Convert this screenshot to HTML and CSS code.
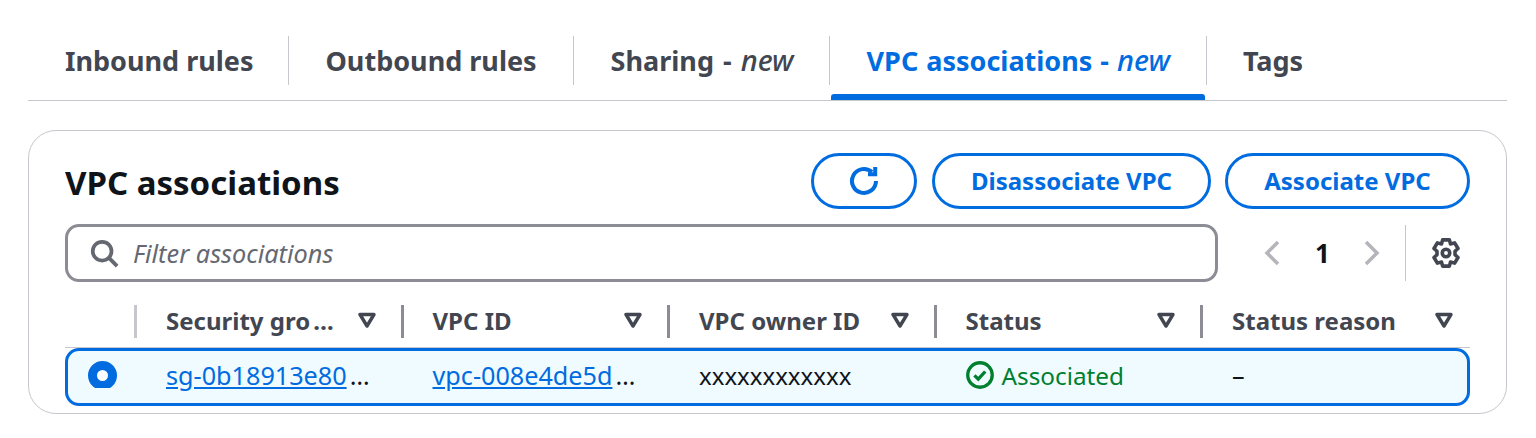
FILE: index.html
```html
<!DOCTYPE html>
<html lang="en">
<head>
    <meta charset="UTF-8">
    <title>VPC associations</title>
    <link rel="stylesheet" href="styles.css">
</head>
<body>

    <div class="tabs">
        <div class="tab">Inbound rules</div>
        <div class="tab">Outbound rules</div>
        <div class="tab tagged">Sharing - <em>new</em></div>
        <div class="tab tagged active">VPC associations - <em>new</em></div>
        <div class="tab last">Tags</div>
    </div>

    <div class="card">
        <div class="card-header">
            <h2>VPC associations</h2>
            <div class="actions">
                <button class="btn btn-icon">
                    <svg width="32" height="32" viewBox="0 0 16 16" fill="none" stroke="currentColor" stroke-width="2">
                        <path d="M14 8a6 6 0 1 1-2-4.5"/>
                        <path d="M13.6 1v3.6H10"/>
                    </svg>
                </button>
                <button class="btn btn-disassociate">Disassociate VPC</button>
                <button class="btn btn-associate">Associate VPC</button>
            </div>
        </div>

        <div class="toolbar">
            <div class="filter">
                <svg width="30" height="30" viewBox="0 0 16 16" fill="none" stroke="#656871" stroke-width="2">
                    <circle cx="7" cy="7" r="5"/>
                    <path d="M10.5 10.5 15 15"/>
                </svg>
                <span>Filter associations</span>
            </div>
            <div class="pager">
                <svg width="20" height="26" viewBox="0 0 20 26" fill="none" stroke="#b4b4bb" stroke-width="3.5"><path d="M16 2 5 13l11 11"/></svg>
                <span class="page-num">1</span>
                <svg width="20" height="26" viewBox="0 0 20 26" fill="none" stroke="#b4b4bb" stroke-width="3.5"><path d="m4 2 11 11L4 24"/></svg>
            </div>
            <div class="prefs">
                <svg width="30" height="30" viewBox="0 0 16 16" fill="none" stroke="#424650" stroke-width="1.9" stroke-linejoin="round">
                    <circle cx="8" cy="8" r="2"/>
                    <path d="M6.2 1h3.6l.6 2.2 2.2-.6 1.8 3-1.6 1.5v1.8l1.6 1.5-1.8 3-2.2-.6-.6 2.2H6.2l-.6-2.2-2.2.6-1.8-3 1.6-1.5V7.1L1.6 5.6l1.8-3 2.2.6z"/>
                </svg>
            </div>
        </div>

        <div class="table">
            <div class="thead">
                <div class="th-select"></div>
                <div class="th"><span>Security gro<span class="dots">…</span></span><svg class="caret" width="18" height="16" viewBox="0 0 18 16" fill="none" stroke="#424650" stroke-width="3.4" stroke-linejoin="round"><path d="M2 2.5h14L9 14z"/></svg></div>
                <div class="th"><span>VPC ID</span><svg class="caret" width="18" height="16" viewBox="0 0 18 16" fill="none" stroke="#424650" stroke-width="3.4" stroke-linejoin="round"><path d="M2 2.5h14L9 14z"/></svg></div>
                <div class="th"><span>VPC owner ID</span><svg class="caret" width="18" height="16" viewBox="0 0 18 16" fill="none" stroke="#424650" stroke-width="3.4" stroke-linejoin="round"><path d="M2 2.5h14L9 14z"/></svg></div>
                <div class="th"><span>Status</span><svg class="caret" width="18" height="16" viewBox="0 0 18 16" fill="none" stroke="#424650" stroke-width="3.4" stroke-linejoin="round"><path d="M2 2.5h14L9 14z"/></svg></div>
                <div class="th"><span>Status reason</span><svg class="caret" width="18" height="16" viewBox="0 0 18 16" fill="none" stroke="#424650" stroke-width="3.4" stroke-linejoin="round"><path d="M2 2.5h14L9 14z"/></svg></div>
            </div>
            <div class="row">
                <div class="td-select"><div class="radio-clip"><div class="radio"></div></div></div>
                <div class="td"><a href="#">sg-0b18913e80</a><span class="dots">…</span></div>
                <div class="td"><a href="#">vpc-008e4de5d</a><span class="dots">…</span></div>
                <div class="td plain">xxxxxxxxxxxx</div>
                <div class="td status">
                    <svg width="28" height="28" viewBox="0 0 16 16" fill="none" stroke="#00802f" stroke-width="1.9">
                        <circle cx="8" cy="8" r="7"/>
                        <path d="m4.8 8.2 2.2 2.2 4-4.4"/>
                    </svg>
                    <span>Associated</span>
                </div>
                <div class="td">–</div>
            </div>
        </div>
    </div>

</body>
</html>
```

FILE: styles.css
```css
* {
    box-sizing: border-box;
}

body {
    margin: 0;
    padding: 36px 29px 0 28px;
    font-family: "Noto Sans", sans-serif;
    background: #fff;
    color: #0f141a;
}

.tabs {
    display: flex;
    height: 65px;
    border-bottom: 1px solid #c6c6cd;
}

.tab {
    position: relative;
    height: 49px;
    padding: 7px 35px 0 37px;
    border-right: 1px solid #c6c6cd;
    color: #424650;
    font-size: 27px;
    font-weight: 700;
    line-height: 36px;
    white-space: nowrap;
}

.tab:nth-child(1) {
    padding-right: 34px;
}

.tab:nth-child(2) {
    padding-right: 36px;
}

.tab.tagged {
    word-spacing: 2px;
}

.tab em {
    font-size: 29px;
    font-weight: 500;
    line-height: 1;
}

.tab.last {
    padding-left: 36px;
    border-right: none;
}

.tab.active {
    padding-right: 36px;
    color: #006ce0;
    word-spacing: 1px;
}

.tab.active::after {
    content: "";
    position: absolute;
    left: 1px;
    right: 1px;
    top: 58px;
    height: 6px;
    border-radius: 3px 3px 0 0;
    background: #006ce0;
}

.card {
    height: 284px;
    margin-top: 29px;
    padding: 22px 36px 0;
    border: 1px solid #c6c6cd;
    border-radius: 28px;
}

.card-header {
    display: flex;
    justify-content: space-between;
    height: 56px;
}

h2 {
    margin: 0;
    padding-top: 8px;
    font-size: 33px;
    font-weight: 700;
    line-height: 44px;
}

.actions {
    display: flex;
    gap: 14px;
}

.btn {
    height: 56px;
    padding: 0 0 2px;
    border: 3px solid #006ce0;
    border-radius: 28px;
    background: #fff;
    color: #006ce0;
    font-family: inherit;
    font-size: 24px;
    font-weight: 700;
}

.btn-icon {
    display: flex;
    align-items: center;
    justify-content: center;
    width: 106px;
    margin-right: 1px;
    padding: 0;
}

.btn-disassociate {
    width: 279px;
}

.btn-associate {
    width: 245px;
}

.toolbar {
    display: flex;
    align-items: center;
    height: 58px;
    margin-top: 15px;
}

.filter {
    display: flex;
    align-items: center;
    gap: 14px;
    width: 1153px;
    height: 58px;
    padding-left: 21px;
    border: 3px solid #8c8c94;
    border-radius: 14px;
    color: #656871;
    font-size: 25.3px;
    font-style: italic;
}

.pager {
    display: flex;
    align-items: center;
    margin-left: 44px;
}

.page-num {
    width: 80px;
    padding-left: 1px;
    text-align: center;
    font-size: 26px;
    font-weight: 700;
}

.prefs {
    display: flex;
    align-items: center;
    height: 56px;
    margin-left: 23px;
    padding-left: 25px;
    border-left: 1px solid #c6c6cd;
}

.thead, .row {
    display: grid;
    width: 1405px;
}

.thead {
    grid-template-columns: 72px repeat(4, 266.5px) 1fr;
    height: 43px;
    margin-top: 23px;
    border-bottom: 1px solid #c6c6cd;
}

.th-select {
    height: 33px;
    border-right: 3px solid #c6c6cd;
}

.th {
    display: flex;
    align-items: center;
    justify-content: space-between;
    height: 33px;
    padding: 0 25px 3px 29px;
    border-right: 3px solid #8c8c94;
    color: #424650;
    font-size: 24px;
    font-weight: 700;
}

.th:last-child {
    padding-right: 17px;
    border-right: none;
}

.row {
    grid-template-columns: 67px repeat(4, 266.5px) 1fr;
    align-items: center;
    height: 58px;
    padding-bottom: 4px;
    border: 3px solid #006ce0;
    border-radius: 14px;
    background: #f0fbff;
}

.td-select {
    margin-bottom: 2px;
    padding-left: 20px;
}

.radio-clip {
    height: 27px;
    overflow: hidden;
}

.radio {
    width: 29px;
    height: 29px;
    border: 9px solid #006ce0;
    border-radius: 50%;
    background: #fff;
}

.td {
    padding-left: 31px;
    font-size: 25.2px;
    white-space: nowrap;
}

.td a {
    color: #006ce0;
}

.dots {
    margin-left: 3px;
}

.td.plain {
    font-size: 24px;
}

.status {
    display: flex;
    align-items: center;
    gap: 8px;
    color: #00802f;
    font-size: 24.3px;
}
```
